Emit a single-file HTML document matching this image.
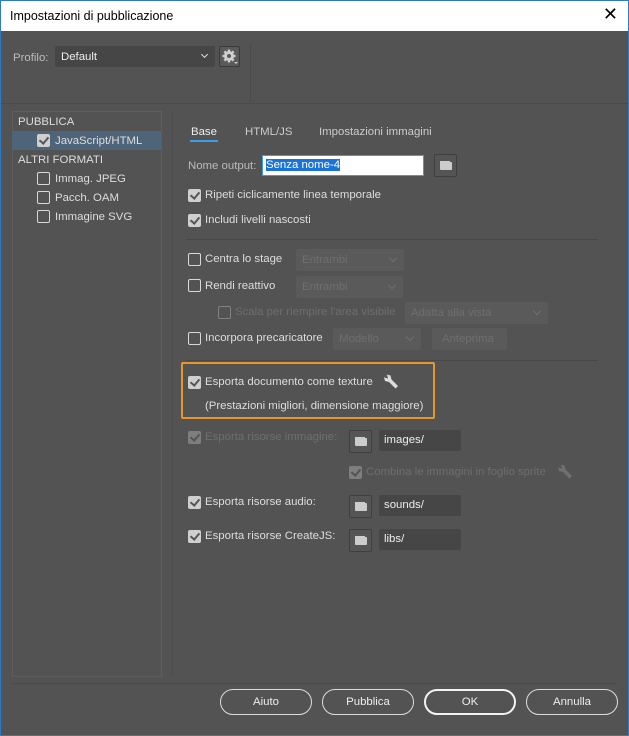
<!DOCTYPE html>
<html><head><style>
*{box-sizing:border-box;margin:0;padding:0}
body{width:629px;height:736px;background:#535353;font-family:"Liberation Sans",sans-serif;font-size:11.4px;color:#ddd;position:relative;overflow:hidden}
.abs{position:absolute}
.win{position:absolute;left:0;top:0;width:629px;height:736px;border:1px solid #2d7bc4;}
.title{position:absolute;left:1px;top:1px;width:627px;height:30px;background:#fff;color:#000;font-size:12.5px;padding:8px 0 0 9px}
.cb{position:absolute;width:13px;height:13px;border:1px solid #d8d8d8;border-radius:2px}
.cb.on{background:#cfcfcf;border-color:#cfcfcf}
.cb.on::after{content:"";position:absolute;left:3px;top:0px;width:4px;height:7px;border:solid #555;border-width:0 2px 2px 0;transform:rotate(40deg)}
.cb.dis{opacity:.35}
.t{position:absolute;white-space:nowrap;margin-top:1px}
.dim{color:#6e6e6e}
.dd{position:absolute;background:#5a5a5a;height:22px;border-radius:2px;color:#6f6f6f;padding:5px 6px}
.dd::after{content:"";position:absolute;right:8px;top:6px;width:5px;height:5px;border:solid #6f6f6f;border-width:0 1px 1px 0;transform:rotate(45deg)}
.nodd::after{display:none}
.fld{position:absolute;background:#464646;height:21px;width:82px;border-radius:2px;color:#eee;padding:4px 5px}
.fb{position:absolute;width:23px;height:23px;border:1px solid #3f3f3f;background:#555;border-radius:2px}
.fb::after{content:"";position:absolute;left:5px;top:7px;width:12px;height:8px;background:#ccc;border-radius:1px;box-shadow:-1px -2px 0 -1px #ccc}
.btn{position:absolute;top:689px;height:26px;width:92px;border:1px solid #ddd;border-radius:13px;text-align:center;padding-top:6px;color:#eee}
</style></head><body>
<div class="win"></div>
<div class="title">Impostazioni di pubblicazione</div>
<div class="t" style="right:11px;top:3px;color:#000;font-size:18px;">✕</div>

<div class="t" style="left:13px;top:51px;color:#bbb">Profilo:</div>
<div class="abs" style="left:55px;top:46px;width:160px;height:21px;background:#464646;border-radius:2px;padding:5px 6px;color:#eee">Default</div>
<div class="abs" style="left:202px;top:52px;width:5px;height:5px;border:solid #ddd;border-width:0 1px 1px 0;transform:rotate(45deg)"></div>
<div class="abs" style="left:219px;top:46px;width:21px;height:21px;border:1px solid #3a3a3a;border-radius:2px;background:#5a5a5a">
<svg width="19" height="19" viewBox="0 0 19 19"><g fill="#cfcfcf"><circle cx="9" cy="9" r="5"/><g stroke="#cfcfcf" stroke-width="2.4"><line x1="9" y1="2.5" x2="9" y2="15.5"/><line x1="2.5" y1="9" x2="15.5" y2="9"/><line x1="4.4" y1="4.4" x2="13.6" y2="13.6"/><line x1="13.6" y1="4.4" x2="4.4" y2="13.6"/></g></g><circle cx="9" cy="9" r="2" fill="#5a5a5a"/><path d="M14 15h4l-2 2z" fill="#cfcfcf"/></svg></div>
<div class="abs" style="left:250px;top:44px;width:1px;height:58px;background:#4a4a4a"></div>
<div class="abs" style="left:1px;top:103px;width:627px;height:1px;background:#4b4b4b"></div>

<div class="abs" style="left:12px;top:111px;width:150px;height:566px;border:1px solid #5e5e5e"></div>
<div class="abs" style="left:12px;top:131px;width:149px;height:19px;background:#4e6479"></div>
<div class="t" style="left:18px;top:115px">PUBBLICA</div>
<div class="cb on" style="left:37px;top:134px"></div><div class="t" style="left:55px;top:134px">JavaScript/HTML</div>
<div class="t" style="left:18px;top:153px">ALTRI FORMATI</div>
<div class="cb" style="left:37px;top:172px"></div><div class="t" style="left:55px;top:172px">Immag. JPEG</div>
<div class="cb" style="left:37px;top:191px"></div><div class="t" style="left:55px;top:191px">Pacch. OAM</div>
<div class="cb" style="left:37px;top:210px"></div><div class="t" style="left:55px;top:210px">Immagine SVG</div>
<div class="abs" style="left:172px;top:111px;width:1px;height:566px;background:#4d4d4d"></div>

<div class="t" style="left:191px;top:125px;color:#eee">Base</div>
<div class="abs" style="left:190px;top:140px;width:28px;height:2px;background:#3d9be9"></div>
<div class="t" style="left:245px;top:125px;color:#ccc">HTML/JS</div>
<div class="t" style="left:319px;top:125px;color:#ccc">Impostazioni immagini</div>

<div class="t" style="left:188px;top:159px;color:#bbb">Nome output:</div>
<div class="abs" style="left:262px;top:155px;width:162px;height:21px;background:#fff;border:1px solid #3d9be9;padding:3px 3px"><span style="background:#1a73d9;color:#fff">Senza nome-4</span></div>
<div class="fb" style="left:434px;top:154px;width:23px;height:23px"></div>
<div class="cb on" style="left:188px;top:189px"></div><div class="t" style="left:205px;top:188px">Ripeti ciclicamente linea temporale</div>
<div class="cb on" style="left:188px;top:214px"></div><div class="t" style="left:205px;top:213px">Includi livelli nascosti</div>
<div class="abs" style="left:186px;top:239px;width:412px;height:1px;background:#484848"></div>

<div class="cb" style="left:188px;top:253px"></div><div class="t" style="left:205px;top:252px">Centra lo stage</div>
<div class="dd" style="left:296px;top:249px;width:108px">Entrambi</div>
<div class="cb" style="left:188px;top:279px"></div><div class="t" style="left:205px;top:279px">Rendi reattivo</div>
<div class="dd" style="left:296px;top:276px;width:107px">Entrambi</div>
<div class="cb dis" style="left:218px;top:306px"></div><div class="t dim" style="left:235px;top:305px">Scala per riempire l'area visibile</div>
<div class="dd" style="left:405px;top:302px;width:143px">Adatta alla vista</div>
<div class="cb" style="left:188px;top:332px"></div><div class="t" style="left:205px;top:331px">Incorpora precaricatore</div>
<div class="dd" style="left:333px;top:328px;width:88px">Modello</div>
<div class="dd nodd" style="left:432px;top:328px;width:75px;padding-left:10px">Anteprima</div>
<div class="abs" style="left:186px;top:360px;width:412px;height:1px;background:#484848"></div>

<div class="abs" style="left:181px;top:362px;width:254px;height:57px;border:2px solid #e8962a;border-radius:2px"></div>
<div class="cb on" style="left:188px;top:376px"></div><div class="t" style="left:205px;top:375px">Esporta documento come texture</div>
<svg class="abs" style="left:383px;top:373px" width="16" height="17" viewBox="0 0 16 16"><path d="M1 4 L4 1 L7.5 2 L8.5 6 L15 12.5 L12.5 15 L6 8.5 L2 7.5 Z" fill="#dcdcdc"/><path d="M1 4 L5 5 L4 1" fill="#535353"/></svg>
<div class="t" style="left:205px;top:399px">(Prestazioni migliori, dimensione maggiore)</div>

<div class="cb on dis" style="left:188px;top:431px"></div><div class="t dim" style="left:205px;top:430px">Esporta risorse immagine:</div>
<div class="fb" style="left:349px;top:430px"></div><div class="fld" style="left:379px;top:430px">images/</div>
<div class="cb on dis" style="left:349px;top:466px"></div><div class="t dim" style="left:366px;top:465px">Combina le immagini in foglio sprite</div>
<svg class="abs" style="left:557px;top:463px" width="16" height="17" viewBox="0 0 16 16"><path d="M1 4 L4 1 L7.5 2 L8.5 6 L15 12.5 L12.5 15 L6 8.5 L2 7.5 Z" fill="#707070"/><path d="M1 4 L5 5 L4 1" fill="#535353"/></svg>
<div class="cb on" style="left:188px;top:496px"></div><div class="t" style="left:205px;top:495px">Esporta risorse audio:</div>
<div class="fb" style="left:349px;top:495px"></div><div class="fld" style="left:379px;top:495px">sounds/</div>
<div class="cb on" style="left:188px;top:530px"></div><div class="t" style="left:205px;top:529px">Esporta risorse CreateJS:</div>
<div class="fb" style="left:349px;top:529px"></div><div class="fld" style="left:379px;top:529px">libs/</div>

<div class="abs" style="left:12px;top:683px;width:604px;height:1px;background:#4a4a4a"></div>
<div class="btn" style="left:220px">Aiuto</div>
<div class="btn" style="left:322px">Pubblica</div>
<div class="btn" style="left:424px;border:2px solid #f2f2f2;padding-top:5px">OK</div>
<div class="btn" style="left:526px">Annulla</div>
</body></html>
